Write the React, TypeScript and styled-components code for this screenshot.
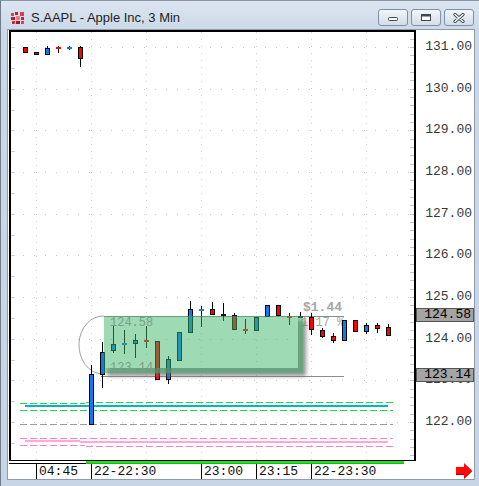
import React from 'react';
import styled, { createGlobalStyle } from 'styled-components';

const Global = createGlobalStyle`
  html, body { margin: 0; padding: 0; background: #fff; }
  body { width: 479px; height: 486px; overflow: hidden; font-family: "Liberation Sans", Arial, sans-serif; }
`;

const Window = styled.div`
  width: 479px;
  height: 486px;
  box-sizing: border-box;
  border-left: 1px solid #6f7c8b;
  border-top: 1px solid #8a97a6;
  background: linear-gradient(#dce6f1, #cad8e8 30px, #c7d5e6);
  display: flex;
  flex-direction: column;
`;

const TitleBar = styled.div`
  height: 28px;
  box-sizing: border-box;
  padding: 8px 5px 0 10px;
  display: flex;
  align-items: flex-start;
`;

const AppIcon = styled.svg`
  margin-top: 3px;
  flex: none;
`;

const Title = styled.div`
  margin-left: 6px;
  font-size: 13px;
  line-height: 17px;
  color: #1e1e1e;
  white-space: nowrap;
`;

const WinButtons = styled.div`
  margin-left: auto;
  display: flex;
  gap: 3px;
`;

const WinButton = styled.div`
  width: 30px;
  height: 17px;
  box-sizing: border-box;
  border: 1px solid #7f90a5;
  border-radius: 3px;
  background: linear-gradient(#f3f6fa, #e2e9f1 50%, #d3dde9);
  display: flex;
  align-items: center;
  justify-content: center;
`;

const Client = styled.div`
  margin-left: 6px;
  width: 468px;
  height: 451px;
  box-sizing: border-box;
  border: 1px solid #8d9bab;
  background: #fff;
  display: grid;
  grid-template-columns: 408px 58px;
  grid-template-rows: 431px 3px 15px;
`;

const PlotCell = styled.div`
  padding-left: 1px;
`;

const PlotBox = styled.div`
  width: 407px;
  height: 431px;
  box-sizing: border-box;
  border: 2px solid #000;
  border-bottom-width: 1px;
  overflow: hidden;
`;

const PriceAxis = styled.div`
  position: relative;
  font-family: "Liberation Mono", "DejaVu Sans Mono", monospace;
  font-size: 13px;
`;

const PriceLabel = styled.div`
  position: absolute;
  left: 0;
  right: 0;
  height: 16px;
  line-height: 16px;
  text-align: right;
  padding-right: 2px;
  color: #3a3a3a;
`;

const PriceBox = styled.div`
  position: absolute;
  left: 0;
  right: 0;
  height: 14px;
  box-sizing: border-box;
  border: 1px solid #555;
  background: #a4a4a4;
  line-height: 12px;
  text-align: right;
  padding-right: 2px;
  color: #000;
`;

const Strip = styled.div`
  padding-left: 1px;
  display: flex;
`;

const StripBlank = styled.div`
  width: 77px;
  height: 3px;
  box-sizing: border-box;
  border-bottom: 1px solid #000;
`;

const StripRange = styled.div`
  width: 318px;
  height: 3px;
  background: #20e020;
  border-bottom: 1px solid #18b818;
  box-sizing: border-box;
`;

const StripCorner = styled.div`
  grid-row: 2 / span 2;
  grid-column: 2;
  display: flex;
  align-items: flex-end;
  justify-content: flex-end;
  padding-right: 1px;
`;

const TimeAxis = styled.div`
  position: relative;
  font-family: "Liberation Mono", "DejaVu Sans Mono", monospace;
  font-size: 13px;
  color: #111;
`;

const TimeTick = styled.div`
  position: absolute;
  top: 0;
  height: 15px;
  border-left: 1px solid #000;
  padding-left: 2px;
  line-height: 15px;
  white-space: nowrap;
`;

const Y = (p: number) => 47 + (131 - p) * 41.67;

type Kind = 'u' | 'd' | 'tu' | 'td' | 'x';
interface Candle { i: number; t: number; b: number; h: number; l: number; k: Kind }

const candles: Candle[] = [
  { i: -6, t: 47, b: 53, h: 47, l: 53, k: 'd' },
  { i: -5, t: 52, b: 55, h: 52, l: 55, k: 'd' },
  { i: -4, t: 48, b: 55, h: 46, l: 55, k: 'u' },
  { i: -3, t: 47, b: 49, h: 46, l: 53, k: 'td' },
  { i: -2, t: 47, b: 49, h: 46, l: 50, k: 'tu' },
  { i: -1, t: 47, b: 59, h: 46, l: 67, k: 'd' },
  { i: 0, t: 374, b: 425, h: 365, l: 425, k: 'u' },
  { i: 1, t: 352, b: 375, h: 342, l: 388, k: 'u' },
  { i: 2, t: 344, b: 351, h: 325, l: 353, k: 'u' },
  { i: 3, t: 343, b: 345, h: 330, l: 354, k: 'tu' },
  { i: 4, t: 340, b: 344, h: 334, l: 358, k: 'u' },
  { i: 5, t: 340, b: 342, h: 326, l: 348, k: 'td' },
  { i: 6, t: 341, b: 380, h: 341, l: 380, k: 'd' },
  { i: 7, t: 359, b: 380, h: 356, l: 384, k: 'u' },
  { i: 8, t: 332, b: 361, h: 332, l: 361, k: 'u' },
  { i: 9, t: 309, b: 333, h: 301, l: 333, k: 'u' },
  { i: 10, t: 309, b: 311, h: 306, l: 327, k: 'tu' },
  { i: 11, t: 309, b: 315, h: 302, l: 315, k: 'd' },
  { i: 12, t: 314, b: 316, h: 303, l: 321, k: 'x' },
  { i: 13, t: 315, b: 330, h: 313, l: 330, k: 'd' },
  { i: 14, t: 329, b: 331, h: 319, l: 334, k: 'td' },
  { i: 15, t: 317, b: 331, h: 317, l: 331, k: 'u' },
  { i: 16, t: 305, b: 317, h: 305, l: 317, k: 'u' },
  { i: 17, t: 305, b: 316, h: 305, l: 316, k: 'd' },
  { i: 18, t: 316, b: 318, h: 313, l: 325, k: 'td' },
  { i: 19, t: 316, b: 318, h: 312, l: 318, k: 'x' },
  { i: 20, t: 317, b: 330, h: 313, l: 335, k: 'd' },
  { i: 21, t: 330, b: 337, h: 328, l: 338, k: 'd' },
  { i: 22, t: 336, b: 341, h: 333, l: 343, k: 'd' },
  { i: 23, t: 320, b: 341, h: 320, l: 341, k: 'u' },
  { i: 24, t: 320, b: 332, h: 320, l: 332, k: 'd' },
  { i: 25, t: 325, b: 332, h: 323, l: 334, k: 'u' },
  { i: 26, t: 325, b: 329, h: 323, l: 333, k: 'd' },
  { i: 27, t: 327, b: 336, h: 324, l: 336, k: 'd' },
];

const BLUE = '#0b7cf5';
const RED = '#ff0000';

const prices = [131, 130, 129, 128, 127, 126, 125, 124, 123, 122];
const gridX = [36.5, 91.5, 146.5, 201.5, 256.5, 311.5, 366.5];
const times = [
  { x: 36, t: '04:45' },
  { x: 91, t: '22-22:30' },
  { x: 201, t: '23:00' },
  { x: 256, t: '23:15' },
  { x: 311, t: '22-23:30' },
];

const CandleMark: React.FC<{ c: Candle }> = ({ c }) => {
  const cx = 91.5 + 11 * c.i;
  const wick = c.h !== c.t || c.l !== c.b ? (
    <line x1={cx} x2={cx} y1={c.h} y2={c.l} stroke="#000" strokeWidth={1} />
  ) : null;
  let body: React.ReactNode;
  if (c.k === 'u' || c.k === 'd') {
    body = (
      <rect x={cx - 2} y={c.t + 0.5} width={4} height={c.b - c.t - 1}
        fill={c.k === 'u' ? BLUE : RED} stroke="#000" strokeWidth={1} />
    );
  } else {
    const fill = c.k === 'tu' ? BLUE : c.k === 'td' ? RED : '#111';
    body = <rect x={cx - 2.5} y={c.t} width={5} height={2} fill={fill} />;
  }
  return <g>{wick}{body}</g>;
};

const dash = '7 3';

const Chart: React.FC = () => {
  const ticks: number[] = [];
  for (let k = -1; k < 50; k++) ticks.push(Math.round(47 + k * 8.334) + 0.5);
  const leftTicks: number[] = [];
  for (let k = -1; k < 22; k++) leftTicks.push(Math.round(47 + k * 20.835) + 0.5);
  return (
    <svg width={403} height={428} viewBox="0 0 403 428">
      <defs>
        <filter id="blur" x="-20%" y="-20%" width="140%" height="140%">
          <feGaussianBlur stdDeviation="2.2" />
        </filter>
        <mask id="shadowMask" maskUnits="userSpaceOnUse" x="0" y="0" width="480" height="500">
          <rect x="0" y="0" width="480" height="500" fill="#fff" />
          <rect x="104" y="316" width="194" height="52" fill="#000" />
        </mask>
      </defs>
      <g transform="translate(-11,-32)">
        {prices.map((p) => (
          <line key={p} x1={12} x2={414} y1={Math.round(Y(p)) + 0.5} y2={Math.round(Y(p)) + 0.5}
            stroke="#c9c9c9" strokeDasharray="1 10" />
        ))}
        {gridX.map((x) => (
          <line key={x} x1={x} x2={x} y1={32} y2={460} stroke="#cfcfcf" strokeDasharray="1 6" />
        ))}
        {ticks.map((y) => (
          <line key={'r' + y} x1={410} x2={414} y1={y} y2={y} stroke="#c6c6c6" />
        ))}
        {leftTicks.map((y) => (
          <line key={'l' + y} x1={11} x2={15} y1={y} y2={y} stroke="#d2d2d2" />
        ))}

        {/* session bands */}
        <line x1={20} x2={85} y1={403.5} y2={403.5} stroke="#22d84a" strokeDasharray={dash} />
        <line x1={86} x2={393} y1={402.5} y2={402.5} stroke="#22d84a" strokeDasharray={dash} />
        <line x1={25} x2={388} y1={406} y2={406} stroke="#00b6c2" strokeWidth={2} />
        <line x1={20} x2={393} y1={410.5} y2={410.5} stroke="#22d84a" strokeDasharray={dash} />
        <line x1={20} x2={393} y1={424.5} y2={424.5} stroke="#9c9c9c" strokeDasharray={dash} />
        <line x1={20} x2={393} y1={438.5} y2={438.5} stroke="#ff80c4" strokeDasharray={dash} />
        <line x1={25} x2={80} y1={441} y2={441} stroke="#ffaad6" strokeWidth={2} />
        <line x1={80} x2={388} y1={442} y2={442} stroke="#ffaad6" strokeWidth={2} />
        <line x1={20} x2={85} y1={445.5} y2={445.5} stroke="#ff80c4" strokeDasharray={dash} />
        <line x1={86} x2={393} y1={446.5} y2={446.5} stroke="#ff80c4" strokeDasharray={dash} />

        {/* measure tool */}
        <line x1={104} x2={344} y1={316.5} y2={316.5} stroke="#8c8c8c" />
        <line x1={101} x2={344} y1={376.5} y2={376.5} stroke="#8c8c8c" />
        <path d="M104,316 A24,29 0 0 0 102,374" fill="none" stroke="#a0a0a0" strokeWidth={1} />
        <text x={303} y={311} fontFamily='"Liberation Mono", monospace' fontSize={13} fontWeight={700} fill="#a6a6a6">$1.44</text>
        <text x={301} y={326} fontFamily='"Liberation Mono", monospace' fontSize={12} fill="#a6a6a6">1.17 %</text>

        {candles.map((c) => <CandleMark key={c.i} c={c} />)}

        <g mask="url(#shadowMask)">
          <rect x={107} y={320} width={199} height={56} fill="#6c6c6c" opacity={0.75} filter="url(#blur)" />
        </g>
        <rect x={104} y={316} width={199} height={57} fill="rgba(62,182,104,0.5)" />
        <text x={110} y={326} fontFamily='"Liberation Mono", monospace' fontSize={12} fill="#7e9d88">124.58</text>
        <text x={110} y={371} fontFamily='"Liberation Mono", monospace' fontSize={12} fill="#7e9d88">123.14</text>
      </g>
    </svg>
  );
};

const App: React.FC = () => (
  <>
    <Global />
    <Window>
      <TitleBar>
        <AppIcon width={14} height={12} viewBox="0 0 14 12">
          <rect x={0} y={1} width={3} height={3} fill="#e04050" />
          <rect x={4} y={0} width={3} height={3} fill="#c81e2a" />
          <rect x={9} y={0} width={4} height={4} fill="#e23a48" />
          <rect x={0} y={5} width={4} height={3} fill="#b81c26" />
          <rect x={5} y={4} width={4} height={4} fill="#f07a86" />
          <rect x={10} y={5} width={3} height={3} fill="#c8202c" />
          <rect x={1} y={9} width={3} height={3} fill="#d42a36" />
          <rect x={5} y={9} width={4} height={3} fill="#a8141e" />
          <rect x={10} y={9} width={3} height={3} fill="#e04050" />
        </AppIcon>
        <Title>S.AAPL - Apple Inc, 3 Min</Title>
        <WinButtons>
          <WinButton>
            <svg width={12} height={8} viewBox="0 0 12 8">
              <rect x={1.5} y={3.5} width={9} height={3} rx={1} fill="#fff" stroke="#3c4654" />
            </svg>
          </WinButton>
          <WinButton>
            <svg width={12} height={9} viewBox="0 0 12 9">
              <rect x={1.5} y={1.5} width={9} height={6} fill="#fff" stroke="#3c4654" />
              <rect x={1.5} y={1.5} width={9} height={2} fill="#3c4654" />
            </svg>
          </WinButton>
          <WinButton>
            <svg width={14} height={10} viewBox="0 0 14 10">
              <path d="M3,1.5 L11,8.5 M11,1.5 L3,8.5" stroke="#3c4654" strokeWidth={3.2} strokeLinecap="round" />
              <path d="M3,1.5 L11,8.5 M11,1.5 L3,8.5" stroke="#fff" strokeWidth={1.4} strokeLinecap="round" />
            </svg>
          </WinButton>
        </WinButtons>
      </TitleBar>
      <Client>
        <PlotCell>
          <PlotBox>
            <Chart />
          </PlotBox>
        </PlotCell>
        <PriceAxis>
          {prices.map((p) => (
            <PriceLabel key={p} style={{ top: Math.round(Y(p)) - 30 - 8 }}>{p.toFixed(2)}</PriceLabel>
          ))}
          <PriceBox style={{ top: Math.round(Y(124.58)) - 30 - 7 }}>124.58</PriceBox>
          <PriceBox style={{ top: Math.round(Y(123.14)) - 30 - 7 }}>123.14</PriceBox>
        </PriceAxis>
        <Strip>
          <StripBlank />
          <StripRange />
        </Strip>
        <StripCorner>
          <svg width={17} height={16} viewBox="0 0 17 16">
            <polygon points="0,5 8,5 8,1 16,8.5 8,16 8,12 0,12" fill="#a80000" />
            <polygon points="0,4 8,4 8,0 16,7.5 8,15 8,11 0,11" fill="#ff0a0a" />
          </svg>
        </StripCorner>
        <TimeAxis>
          {times.map((t) => (
            <TimeTick key={t.x} style={{ left: t.x - 8 }}>{t.t}</TimeTick>
          ))}
        </TimeAxis>
      </Client>
    </Window>
  </>
);

export default App;
